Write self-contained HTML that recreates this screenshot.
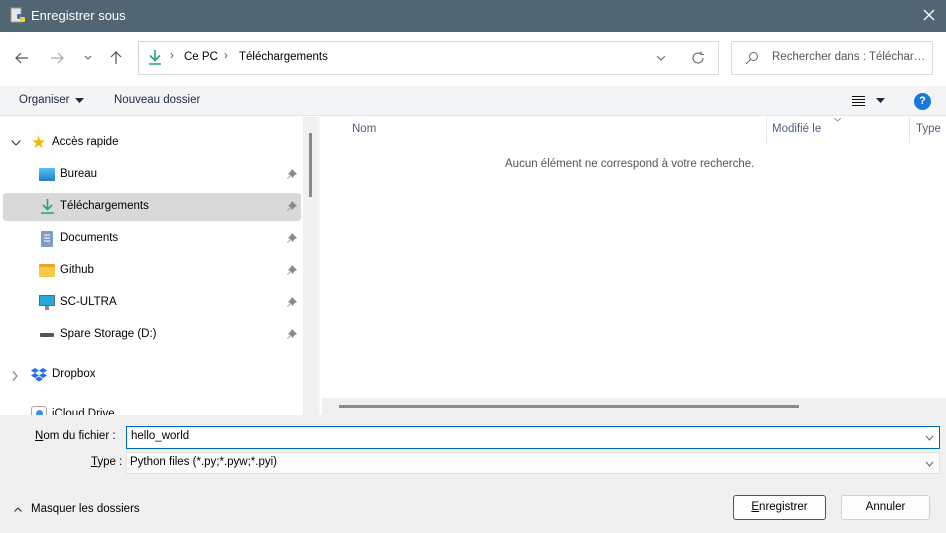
<!DOCTYPE html>
<html><head><meta charset="utf-8"><style>
*{box-sizing:border-box;margin:0;padding:0}
body{width:946px;height:533px;overflow:hidden;font-family:"Liberation Sans",sans-serif;font-size:11.5px;color:#000;background:#fff;position:relative}
.a{position:absolute}
.t{white-space:nowrap}
</style></head><body>
<div class="a" style="left:0;top:0;width:946px;height:32px;background:#516672"></div>
<svg class="a" style="left:9px;top:7px" width="18" height="18" viewBox="0 0 18 18"><rect x="2" y="1" width="10" height="14" fill="#e8e8e8" stroke="#999"/><rect x="8" y="7" width="5" height="5" rx="1" fill="#3b76b0"/><rect x="11" y="10" width="5" height="5" rx="1" fill="#f6cd3c"/></svg>
<div class="a t" style="left:31px;top:8px;font-size:13px;color:#fff">Enregistrer sous</div>
<svg class="a" style="left:923px;top:9px" width="12" height="12"><path d="M1 1L11 11M11 1L1 11" stroke="#fff" stroke-width="1.3"/></svg>
<svg class="a" style="left:14px;top:50px" width="16" height="16"><path d="M14 8H2M7 3L2 8L7 13" stroke="#555" stroke-width="1.2" fill="none"/></svg>
<svg class="a" style="left:49px;top:50px" width="16" height="16"><path d="M2 8H14M9 3L14 8L9 13" stroke="#aaa" stroke-width="1.2" fill="none"/></svg>
<svg class="a" style="left:83px;top:54px" width="10" height="8"><path d="M2 2L5 5L8 2" stroke="#666" stroke-width="1.1" fill="none"/></svg>
<svg class="a" style="left:108px;top:50px" width="16" height="16"><path d="M8 14V2M3 7L8 2L13 7" stroke="#555" stroke-width="1.2" fill="none"/></svg>
<div class="a" style="left:138px;top:41px;width:581px;height:34px;border:1px solid #d9d9d9"></div>
<svg class="a" style="left:147px;top:49px" width="16" height="17"><path d="M8 1V11M3 6.5L8 11.5L13 6.5" stroke="#1fa67a" stroke-width="1.6" fill="none"/><path d="M2 15H14" stroke="#1fa67a" stroke-width="1.5"/></svg>
<div class="a t" style="left:170px;top:50px;color:#555">›</div>
<div class="a t" style="left:184px;top:51px">Ce PC</div>
<div class="a t" style="left:224px;top:50px;color:#555">›</div>
<div class="a t" style="left:239px;top:51px">Téléchargements</div>
<svg class="a" style="left:656px;top:55px" width="10" height="7"><path d="M1 1L5 5L9 1" stroke="#666" fill="none"/></svg>
<svg class="a" style="left:691px;top:51px" width="14" height="14"><path d="M12 7A5 5 0 1 1 10 3M10 0.5V3.5H13" stroke="#666" stroke-width="1.1" fill="none"/></svg>
<div class="a" style="left:731px;top:41px;width:202px;height:34px;border:1px solid #d9d9d9"></div>
<svg class="a" style="left:745px;top:51px" width="14" height="14"><circle cx="8.5" cy="5.5" r="4" stroke="#666" fill="none"/><path d="M5.5 8.5L1 13" stroke="#666"/></svg>
<div class="a t" style="left:772px;top:51px;color:#555;width:156px;overflow:hidden;text-overflow:ellipsis">Rechercher dans : Télécharg...</div>
<div class="a" style="left:0;top:86px;width:946px;height:30px;background:#f3f4f6;border-bottom:1px solid #e5e5e5"></div>
<div class="a t" style="left:19px;top:94px;color:#1a2a40">Organiser</div>
<svg class="a" style="left:75px;top:98px" width="9" height="5"><path d="M0 0H9L4.5 5Z" fill="#1a2a40"/></svg>
<div class="a t" style="left:114px;top:94px;color:#1a2a40">Nouveau dossier</div>
<svg class="a" style="left:852px;top:95px" width="14" height="12"><path d="M0 1.5H13M0 4.5H13M0 7.5H13M0 10.5H13" stroke="#111"/></svg>
<svg class="a" style="left:876px;top:98px" width="9" height="5"><path d="M0 0H9L4.5 5Z" fill="#1a2a40"/></svg>
<div class="a" style="left:914px;top:93px;width:17px;height:17px;border-radius:50%;background:#1a78d6;color:#fff;font-size:11px;font-weight:bold;text-align:center;line-height:17px">?</div>
<div class="a" style="left:303px;top:117px;width:15px;height:298px;background:#f0f0f0"></div>
<div class="a" style="left:309px;top:133px;width:3px;height:64px;background:#8a8a8a"></div>
<svg class="a" style="left:10px;top:139px" width="12" height="8"><path d="M1.5 1.5L6 6L10.5 1.5" stroke="#333" stroke-width="1.1" fill="none"/></svg>
<div class="a" style="left:31px;top:133px;color:#f5b800;font-size:17px">★</div>
<div class="a t" style="left:52px;top:136px">Accès rapide</div>
<div class="a" style="left:3px;top:193px;width:298px;height:28px;background:#d9d9d9;border-radius:3px"></div>
<div class="a" style="left:39px;top:168px;width:16px;height:13px;background:linear-gradient(#5ac0ee,#1e82c4);border-radius:1px"></div>
<svg class="a" style="left:40px;top:198px" width="15" height="17"><path d="M7.5 1V11M3 7L7.5 11.5L12 7" stroke="#1fa67a" stroke-width="1.6" fill="none"/><path d="M1 15H14" stroke="#1fa67a" stroke-width="1.5"/></svg>
<div class="a" style="left:41px;top:231px;width:12px;height:16px;background:#7f9cc4;border-radius:1px"></div>
<svg class="a" style="left:41px;top:231px" width="12" height="16"><path d="M3 4H9M3 7H9M3 10H9" stroke="#fff"/></svg>
<div class="a" style="left:39px;top:264px;width:16px;height:13px;background:#f7c94a;border-radius:1px;border-top:3px solid #e6a924"></div>
<div class="a" style="left:39px;top:295px;width:16px;height:11px;background:#29a8e0;border:1px solid #5a6b7a"></div>
<div class="a" style="left:45px;top:306px;width:4px;height:4px;background:#888"></div>
<div class="a" style="left:40px;top:333px;width:14px;height:4px;background:#555;border-radius:1px"></div>
<div class="a t" style="left:60px;top:168px">Bureau</div>
<div class="a t" style="left:60px;top:200px">Téléchargements</div>
<div class="a t" style="left:60px;top:232px">Documents</div>
<div class="a t" style="left:60px;top:264px">Github</div>
<div class="a t" style="left:60px;top:296px">SC-ULTRA</div>
<div class="a t" style="left:60px;top:328px">Spare Storage (D:)</div>
<svg class="a" style="left:286px;top:168px" width="12" height="180"><g fill="#8a8a8a">
<path d="M6 1L11 6L9 7L6 10L5 7.5L1.5 11L1 10.5L4.5 7L2 6L5 3Z"/>
<path transform="translate(0,32)" d="M6 1L11 6L9 7L6 10L5 7.5L1.5 11L1 10.5L4.5 7L2 6L5 3Z"/>
<path transform="translate(0,64)" d="M6 1L11 6L9 7L6 10L5 7.5L1.5 11L1 10.5L4.5 7L2 6L5 3Z"/>
<path transform="translate(0,96)" d="M6 1L11 6L9 7L6 10L5 7.5L1.5 11L1 10.5L4.5 7L2 6L5 3Z"/>
<path transform="translate(0,128)" d="M6 1L11 6L9 7L6 10L5 7.5L1.5 11L1 10.5L4.5 7L2 6L5 3Z"/>
<path transform="translate(0,160)" d="M6 1L11 6L9 7L6 10L5 7.5L1.5 11L1 10.5L4.5 7L2 6L5 3Z"/>
</g></svg>
<svg class="a" style="left:11px;top:370px" width="8" height="12"><path d="M2 1.5L6 6L2 10.5" stroke="#777" stroke-width="1.1" fill="none"/></svg>
<svg class="a" style="left:31px;top:367px" width="16" height="15"><g fill="#1f6ff2"><path d="M4 1L8 3.5L4 6L0 3.5Z M12 1L16 3.5L12 6L8 3.5Z M4 6L8 8.5L4 11L0 8.5Z M12 6L16 8.5L12 11L8 8.5Z M8 9.5L12 12L8 14.5L4 12Z"/></g></svg>
<div class="a t" style="left:52px;top:368px">Dropbox</div>
<div class="a" style="left:0;top:401px;width:303px;height:14px;overflow:hidden"><div class="a t" style="left:52px;top:7px">iCloud Drive</div><div class="a" style="left:31px;top:5px;width:16px;height:14px;border:1px solid #aaa;border-radius:3px;background:#fff"></div><div class="a" style="left:36px;top:9px;width:7px;height:7px;border-radius:50%;background:#3a8ee6"></div></div>
<div class="a" style="left:318px;top:117px;width:2px;height:298px;background:#f6f6f6"></div>
<div class="a t" style="left:352px;top:123px;color:#4c607a">Nom</div>
<div class="a" style="left:766px;top:117px;width:1px;height:26px;background:#e5e5e5"></div>
<svg class="a" style="left:833px;top:117px" width="9" height="5"><path d="M1 1L4.5 4L8 1" stroke="#999" fill="none"/></svg>
<div class="a t" style="left:772px;top:123px;color:#4c607a">Modifié le</div>
<div class="a" style="left:909px;top:117px;width:1px;height:26px;background:#e5e5e5"></div>
<div class="a t" style="left:916px;top:123px;color:#4c607a">Type</div>
<div class="a t" style="left:505px;top:158px;color:#555">Aucun élément ne correspond à votre recherche.</div>
<div class="a" style="left:322px;top:398px;width:624px;height:17px;background:#f0f0f0"></div>
<div class="a" style="left:339px;top:405px;width:460px;height:3px;background:#8a8a8a"></div>
<div class="a" style="left:0;top:415px;width:946px;height:118px;background:#f0f0f0"></div>
<div class="a t" style="left:35px;top:430px"><u>N</u>om du fichier :</div>
<div class="a" style="left:126px;top:426px;width:814px;height:23px;background:#fff;border:1px solid #0067c0"></div>
<div class="a t" style="left:131px;top:430px">hello_world</div>
<svg class="a" style="left:925px;top:435px" width="9" height="6"><path d="M1 1L4.5 5L8 1" stroke="#666" fill="none"/></svg>
<div class="a t" style="left:91px;top:456px"><u>T</u>ype :</div>
<div class="a" style="left:126px;top:452px;width:814px;height:22px;background:#fbfbfb;border:1px solid #e0e0e0"></div>
<div class="a t" style="left:130px;top:456px">Python files (*.py;*.pyw;*.pyi)</div>
<svg class="a" style="left:925px;top:461px" width="9" height="6"><path d="M1 1L4.5 5L8 1" stroke="#666" fill="none"/></svg>
<svg class="a" style="left:13px;top:506px" width="10" height="7"><path d="M1.5 5.5L5 2L8.5 5.5" stroke="#333" stroke-width="1.1" fill="none"/></svg>
<div class="a t" style="left:31px;top:503px">Masquer les dossiers</div>
<div class="a" style="left:733px;top:495px;width:93px;height:25px;background:#fdfdfd;border:1px solid #0067c0;border-radius:3px;text-align:center;line-height:23px"><u>E</u>nregistrer</div>
<div class="a" style="left:841px;top:495px;width:89px;height:25px;background:#fdfdfd;border:1px solid #d0d0d0;border-radius:3px;text-align:center;line-height:23px">Annuler</div>
</body></html>
